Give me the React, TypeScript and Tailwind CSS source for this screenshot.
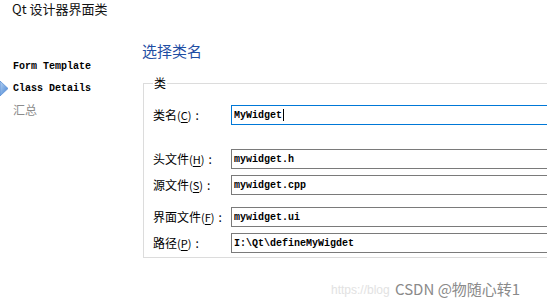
import React from 'react';

const cjk = "font-['Noto_Sans_CJK_SC','Noto_Sans',sans-serif]";
const mono = "font-['Liberation_Mono',monospace]";

type Field = {
  name: string;
  key: string;
  value: string;
  mt: string;
  focused?: boolean;
};

const fields: Field[] = [
  { name: '类名', key: 'C', value: 'MyWidget', mt: 'mt-[15px]', focused: true },
  { name: '头文件', key: 'H', value: 'mywidget.h', mt: 'mt-[24px]' },
  { name: '源文件', key: 'S', value: 'mywidget.cpp', mt: 'mt-[6px]' },
  { name: '界面文件', key: 'F', value: 'mywidget.ui', mt: 'mt-[12px]' },
  { name: '路径', key: 'P', value: 'I:\\Qt\\defineMyWigdet', mt: 'mt-[6px]' },
];

function NavArrow() {
  return (
    <svg width="9" height="15" viewBox="0 0 9 15" className="block">
      <defs>
        <linearGradient id="arr" x1="0" y1="0" x2="1" y2="1">
          <stop offset="0" stopColor="#b9d4f3" />
          <stop offset="1" stopColor="#3f7fd1" />
        </linearGradient>
      </defs>
      <polygon points="0,0 8,7.5 0,15" fill="url(#arr)" stroke="#5b8fd6" strokeWidth="0.8" />
    </svg>
  );
}

function Row({ field }: { field: Field }) {
  return (
    <div className={`flex items-center h-[20px] ${field.mt}`}>
      <div className={`w-[78px] flex items-center text-[12px] leading-[20px] text-black ${cjk}`}>
        <span>{field.name}</span>
        <span className="text-[11px]">(</span>
        <span className="text-[11px] underline underline-offset-2">{field.key}</span>
        <span className="text-[11px]">)</span>
        <span className="ml-[4px]">:</span>
      </div>
      <div
        className={`flex-1 h-[20px] flex items-center pl-[2px] border bg-white ${
          field.focused ? 'border-[#0078d7]' : 'border-[#7a7a7a]'
        }`}
      >
        <span className={`text-[10px] font-bold text-black whitespace-pre ${mono}`}>{field.value}</span>
        {field.focused && <span className="w-px h-[12px] bg-black ml-px"></span>}
      </div>
    </div>
  );
}

export default function App() {
  return (
    <div className={`relative w-[547px] h-[307px] overflow-hidden bg-white flex flex-col ${cjk}`}>
      <div className="h-[20px] pl-[12px] pt-px text-[13px] leading-4 text-[#111]">Qt 设计器界面类</div>
      <div className="flex flex-1">
        <div className="w-[142px] shrink-0 pt-[35px]">
          <div className="flex items-center h-[22px]">
            <div className="w-[13px]"></div>
            <span className={`text-[10px] font-bold text-black ${mono}`}>Form Template</span>
          </div>
          <div className="flex items-center h-[22px]">
            <div className="w-[13px]">
              <NavArrow />
            </div>
            <span className={`text-[10px] font-bold text-black ${mono}`}>Class Details</span>
          </div>
          <div className="flex items-center h-[21px]">
            <div className="w-[13px]"></div>
            <span className="text-[12px] text-[#8c8c8c]">汇总</span>
          </div>
        </div>
        <div className="flex-1 min-w-0 pt-[21px]">
          <div className="h-[20px] leading-[20px] text-[15px] text-[#1f4ea3]">选择类名</div>
          <div className="mt-[22px] ml-px w-[440px] h-[175px] border border-[#dcdcdc] pl-[9px]">
            <div className="-mt-[8px] h-[14px] leading-[14px] w-fit px-px bg-white text-[12px] text-black">类</div>
            <div className="w-[420px]">
              {fields.map((f) => (
                <Row key={f.key + f.name} field={f} />
              ))}
            </div>
          </div>
        </div>
      </div>
      <div className="absolute left-[331px] top-[282px] text-[12px] leading-[16px] text-[#e2e2e2] font-['Liberation_Sans',sans-serif] whitespace-nowrap">
        https://blog
      </div>
      <div className="absolute left-[395px] top-[279px] text-[15px] leading-[20px] text-[#8a8a8a] whitespace-nowrap">
        CSDN @物随心转1
      </div>
    </div>
  );
}
